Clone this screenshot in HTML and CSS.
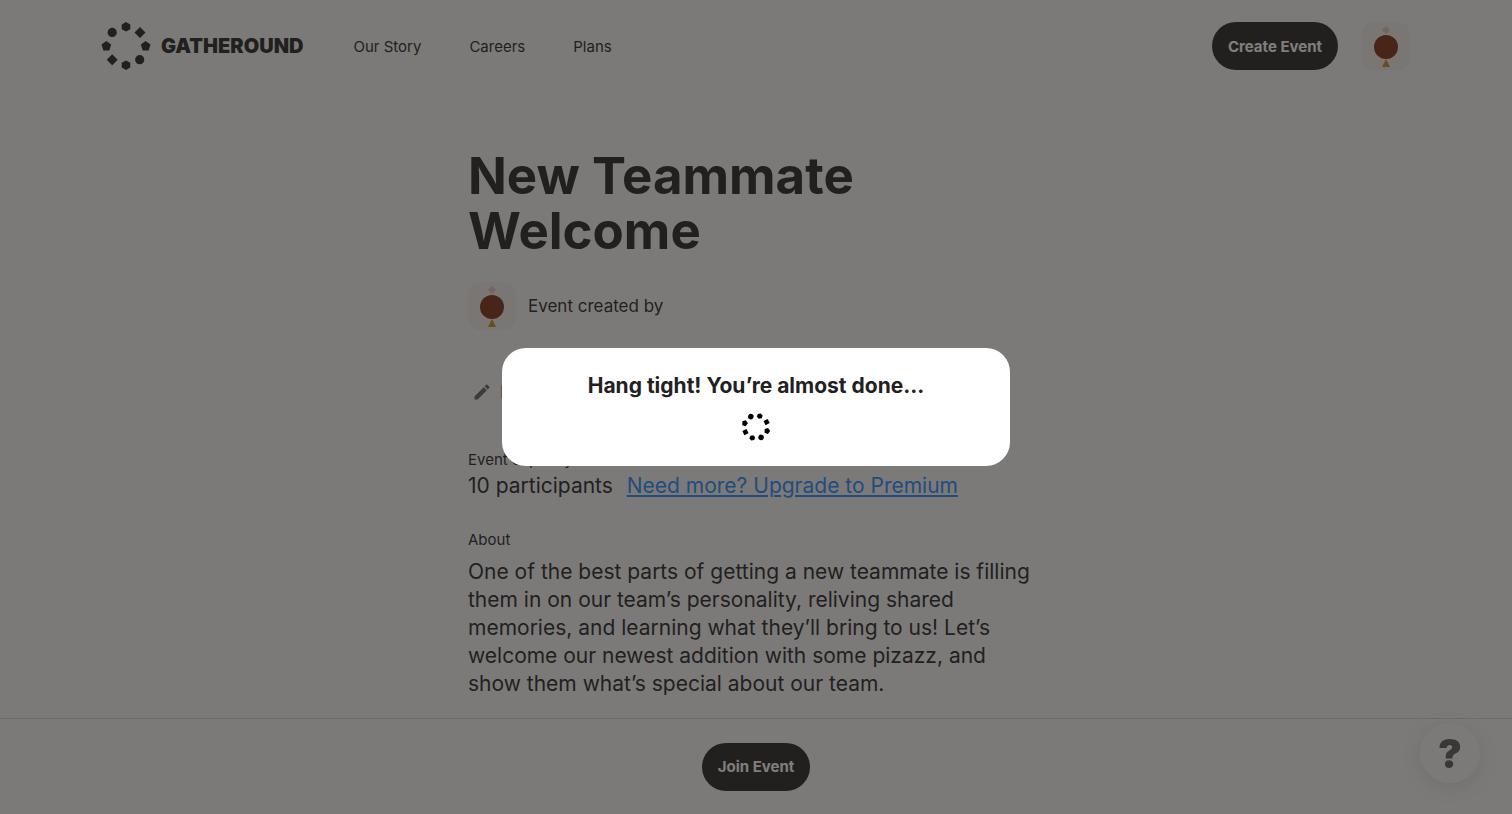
FILE: index.html
```
<!DOCTYPE html>
<html lang="en">

	<head>
		<title>New Teammate Welcome</title>
		<meta charset="utf-8" />
		<meta name="viewport" content="width=device-width, initial-scale=1" />
		<link rel="stylesheet" href="styles.css">
	</head>

	<body>
		<header class="header">
			<a class="logo" href="#">
				<svg class="logoMark" viewBox="0 0 50 50" aria-hidden="true">
					<g id="ring">
						<path d="M25 1l4.3 2.4v4.8L25 10.600l-4.300-2.400V3.400zM25 39.400l4.300 2.400v4.800L25 49l-4.300-2.400v-4.800zM39 5.900l5.500 5.500-5.500 5.500-5.500-5.500zM11.200 33.300l5.500 5.500-5.500 5.500-5.500-5.500zM5.300 20l4.900 3.500-1.900 6.100H2.400L.5 23.500zM44.600 20l4.900 3.500-1.900 6.100h-5.900l-1.900-6.100z" />
						<circle cx="11.200" cy="11.400" r="4.600" />
						<circle cx="38.700" cy="38.700" r="4.600" />
					</g>
				</svg>
				<span class="logoText">GATHEROUND</span>
			</a>
			<nav class="nav">
				<a href="#">Our Story</a>
				<a href="#">Careers</a>
				<a href="#">Plans</a>
			</nav>
			<button class="btn" type="button">Create Event</button>
			<svg class="avatar" viewBox="0 0 48 48" role="img" aria-label="Your profile">
				<path class="avatarTop" d="M24 4l4 4-4 4-4-4z" />
				<circle class="avatarBody" cx="24" cy="25" r="12" />
				<path class="avatarFoot" d="M24 37l4 8h-8z" />
			</svg>
		</header>

		<main class="event">
			<h1>New Teammate Welcome</h1>
			<div class="host">
				<svg class="avatar" viewBox="0 0 48 48" role="img" aria-label="Host">
					<path class="avatarTop" d="M24 4l4 4-4 4-4-4z" />
					<circle class="avatarBody" cx="24" cy="25" r="12" />
					<path class="avatarFoot" d="M24 37l4 8h-8z" />
				</svg>
				<span>Event created by</span>
			</div>
			<button class="edit" type="button">
				<svg viewBox="0 0 24 24" aria-hidden="true">
					<path d="M3 17.250V21h3.750L17.810 9.940l-3.750-3.750L3 17.250zM20.710 7.040a1 1 0 0 0 0-1.410l-2.340-2.340a1 1 0 0 0-1.410 0l-1.830 1.830 3.750 3.750 1.830-1.830z" />
				</svg>
				Edit
			</button>
			<section class="info">
				<h2>Event capacity</h2>
				<p class="capacity"><span>10 participants</span> <a href="#">Need more? Upgrade to Premium</a></p>
			</section>
			<section class="info about">
				<h2>About</h2>
				<p>One of the best parts of getting a new teammate is filling them in on our team’s personality, reliving shared memories, and learning what they’ll bring to us! Let’s welcome our newest addition with some pizazz, and show them what’s special about our team.</p>
			</section>
		</main>

		<footer class="footer">
			<button class="btn" type="button">Join Event</button>
		</footer>

		<button class="help" type="button" aria-label="Help">?</button>

		<div class="overlay">
			<div class="dialog" role="dialog" aria-labelledby="dialogTitle">
				<h2 id="dialogTitle">Hang tight! You’re almost done...</h2>
				<svg class="spinner" viewBox="0 0 50 50" aria-hidden="true">
					<use href="#ring" transform="rotate(19 25 25)" />
				</svg>
			</div>
		</div>
	</body>

</html>
```
FILE: styles.css
```
* {box-sizing: border-box;}
body {margin: 0;height: 100vh;overflow: hidden;display: flex;flex-direction: column;background: #f7f5f3;color: #22211f;font-family: Inter, "Liberation Sans", sans-serif;font-size: 16px;}
h1, h2, p {margin: 0;}
a {color: inherit;}
button {font-family: inherit;color: inherit;border: 0;}

.header {display: flex;align-items: center;flex: none;height: 92px;padding: 0 102px 0 101px;}
.logo {display: flex;align-items: center;gap: 10px;text-decoration: none;}
.logoMark {width: 50px;height: 50px;fill: #22211f;}
.logoText {font-size: 20px;font-weight: 900;}
.nav {display: flex;gap: 48px;margin: 0 auto 0 50px;font-size: 15px;}
.nav a {text-decoration: none;}
.btn {height: 48px;padding: 0 16px;border-radius: 24px;background: #22211f;color: #fff;font-size: 15px;font-weight: 700;}
.avatar {flex: none;width: 48px;height: 48px;border-radius: 12px;background: #f3ebe7;}
.header .avatar {margin-left: 24px;}
.avatarTop {fill: #e8c0bf;}
.avatarBody {fill: #7e2c0c;}
.avatarFoot {fill: #c0901c;}

.event {flex: 1;min-height: 0;overflow: hidden;width: 100%;max-width: 576px;margin: 0 auto;padding-top: 56px;}
h1 {max-width: 480px;font-size: 51px;line-height: 55px;font-weight: 700;}
.host {display: flex;align-items: center;gap: 12px;margin-top: 24px;font-size: 17px;}
.edit {display: flex;align-items: center;gap: 8px;height: 40px;margin-top: 42px;padding: 0 4px;background: none;font-size: 17px;opacity: .7;}
.edit svg {width: 20px;height: 20px;fill: #22211f;}
.info {margin-top: 38px;font-size: 21px;line-height: 28px;}
.info h2 {font-size: 15px;line-height: 20px;font-weight: 400;}
.capacity {margin-top: 2px;}
.capacity a {margin-left: 8px;color: #2288ff;text-underline-offset: 2px;}
.about {margin-top: 30px;}
.about p {margin-top: 8px;}

.footer {display: flex;align-items: center;justify-content: center;flex: none;height: 96px;border-top: 1px solid #d8d5d2;}
.help {position: fixed;right: 32px;bottom: 31px;width: 60px;height: 60px;padding: 0;border-radius: 50%;background: #f7f5f3;color: #5c5a58;font-size: 40px;font-weight: 900;box-shadow: 0 4px 20px rgba(0,0,0,.1);}

.overlay {position: fixed;top: 0;right: 0;bottom: 0;left: 0;display: flex;align-items: center;justify-content: center;background: rgba(34,33,31,.58);}
.dialog {display: flex;flex-direction: column;align-items: center;gap: 12px;width: 90%;max-width: 508px;padding: 24px;border-radius: 24px;background: #fff;}
.dialog h2 {font-size: 21px;line-height: 28px;font-weight: 700;}
.spinner {width: 30px;height: 30px;}
```
